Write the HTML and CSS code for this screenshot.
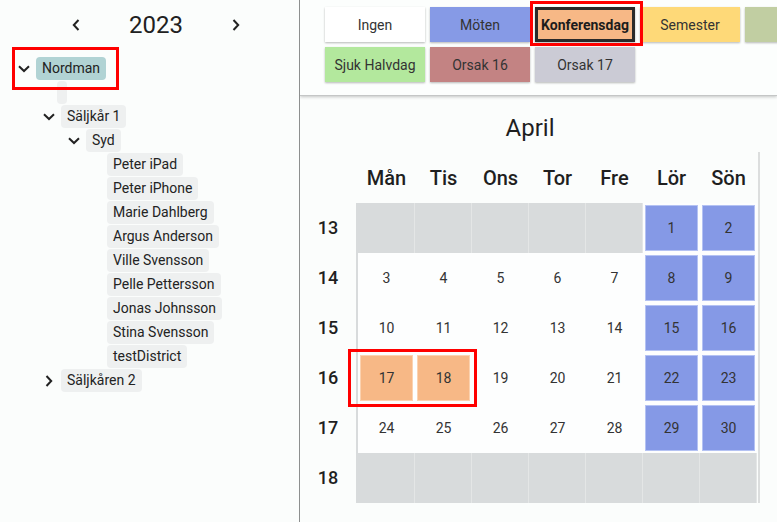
FILE: index.html
```html
<!DOCTYPE html>
<html lang="sv">
<head>
<meta charset="utf-8">
<title>Kalender</title>
<link rel="stylesheet" href="styles.css">
</head>
<body>
<div class="app">
  <aside class="sidebar">
    <div class="yearbar">
      <button class="nav-btn" aria-label="Föregående år">
        <svg width="8" height="12" viewBox="0 0 8 12"><path d="M6.5 1 L1.8 6 L6.5 11" fill="none" stroke="#222" stroke-width="2"/></svg>
      </button>
      <div class="year">2023</div>
      <button class="nav-btn" aria-label="Nästa år">
        <svg width="8" height="12" viewBox="0 0 8 12"><path d="M1.5 1 L6.2 6 L1.5 11" fill="none" stroke="#222" stroke-width="2"/></svg>
      </button>
    </div>
    <ul class="tree">
      <li>
        <div class="row"><span class="twisty"><svg width="12" height="8" viewBox="0 0 12 8"><path d="M1 1.2 L6 6 L11 1.2" fill="none" stroke="#222" stroke-width="2"/></svg></span><span class="chip chip-sel">Nordman</span></div>
        <ul>
          <li><div class="row"><span class="leaf"></span><span class="chip chip-empty"></span></div></li>
          <li>
            <div class="row"><span class="twisty"><svg width="12" height="8" viewBox="0 0 12 8"><path d="M1 1.2 L6 6 L11 1.2" fill="none" stroke="#222" stroke-width="2"/></svg></span><span class="chip">Säljkår 1</span></div>
            <ul>
              <li>
                <div class="row"><span class="twisty"><svg width="12" height="8" viewBox="0 0 12 8"><path d="M1 1.2 L6 6 L11 1.2" fill="none" stroke="#222" stroke-width="2"/></svg></span><span class="chip">Syd</span></div>
                <ul>
                  <li><div class="row"><span class="leaf"></span><span class="chip">Peter iPad</span></div></li>
                  <li><div class="row"><span class="leaf"></span><span class="chip">Peter iPhone</span></div></li>
                  <li><div class="row"><span class="leaf"></span><span class="chip">Marie Dahlberg</span></div></li>
                  <li><div class="row"><span class="leaf"></span><span class="chip">Argus Anderson</span></div></li>
                  <li><div class="row"><span class="leaf"></span><span class="chip">Ville Svensson</span></div></li>
                  <li><div class="row"><span class="leaf"></span><span class="chip">Pelle Pettersson</span></div></li>
                  <li><div class="row"><span class="leaf"></span><span class="chip">Jonas Johnsson</span></div></li>
                  <li><div class="row"><span class="leaf"></span><span class="chip">Stina Svensson</span></div></li>
                  <li><div class="row"><span class="leaf"></span><span class="chip">testDistrict</span></div></li>
                </ul>
              </li>
            </ul>
          </li>
          <li><div class="row"><span class="twisty"><svg width="8" height="12" viewBox="0 0 8 12"><path d="M1.5 1 L6.2 6 L1.5 11" fill="none" stroke="#222" stroke-width="2"/></svg></span><span class="chip">Säljkåren 2</span></div></li>
        </ul>
      </li>
    </ul>
  </aside>

  <main class="main">
    <div class="toolbar">
      <button class="reason r-none">Ingen</button>
      <button class="reason r-meet">Möten</button>
      <button class="reason r-conf active">Konferensdag</button>
      <button class="reason r-vac">Semester</button>
      <button class="reason r-sick" aria-label="Sjuk"></button>
      <button class="reason r-half">Sjuk Halvdag</button>
      <button class="reason r-16">Orsak 16</button>
      <button class="reason r-17">Orsak 17</button>
    </div>

    <section class="cal">
      <h2 class="cal-title">April</h2>
      <div class="cal-table">
        <div class="cal-head">
          <div class="wk-head"></div>
          <div class="dn">Mån</div><div class="dn">Tis</div><div class="dn">Ons</div><div class="dn">Tor</div><div class="dn">Fre</div><div class="dn">Lör</div><div class="dn">Sön</div>
        </div>
        <div class="cal-body">
          <div class="wk-col">
            <div class="wk">13</div><div class="wk">14</div><div class="wk">15</div><div class="wk">16</div><div class="wk">17</div><div class="wk">18</div>
          </div>
          <div class="days">
            <div class="d out"></div><div class="d out"></div><div class="d out"></div><div class="d out"></div><div class="d out"></div>
            <div class="d"><span class="mark m-blue">1</span></div><div class="d"><span class="mark m-blue">2</span></div>

            <div class="d">3</div><div class="d">4</div><div class="d">5</div><div class="d">6</div><div class="d">7</div>
            <div class="d"><span class="mark m-blue">8</span></div><div class="d"><span class="mark m-blue">9</span></div>

            <div class="d">10</div><div class="d">11</div><div class="d">12</div><div class="d">13</div><div class="d">14</div>
            <div class="d"><span class="mark m-blue">15</span></div><div class="d"><span class="mark m-blue">16</span></div>

            <div class="d"><span class="mark m-orange">17</span></div><div class="d"><span class="mark m-orange">18</span></div><div class="d">19</div><div class="d">20</div><div class="d">21</div>
            <div class="d"><span class="mark m-blue">22</span></div><div class="d"><span class="mark m-blue">23</span></div>

            <div class="d">24</div><div class="d">25</div><div class="d">26</div><div class="d">27</div><div class="d">28</div>
            <div class="d"><span class="mark m-blue">29</span></div><div class="d"><span class="mark m-blue">30</span></div>

            <div class="d out"></div><div class="d out"></div><div class="d out"></div><div class="d out"></div><div class="d out"></div><div class="d out"></div><div class="d out"></div>
          </div>
        </div>
      </div>
    </section>
  </main>
</div>

<div class="annot annot-toolbar"></div>
<div class="annot annot-tree"></div>
<div class="annot annot-days"></div>
</body>
</html>
```

FILE: styles.css
```css
* { box-sizing: border-box; }

html, body {
  margin: 0;
  padding: 0;
}

body {
  position: relative;
  width: 777px;
  height: 522px;
  overflow: hidden;
  background: #fbfdfc;
  font-family: Roboto, "Liberation Sans", Arial, sans-serif;
  color: #212121;
}

.app {
  display: flex;
  height: 522px;
}

/* ---------- Sidebar ---------- */
.sidebar {
  width: 300px;
  flex: 0 0 300px;
  border-right: 1px solid #8d8f8f;
  background: #fbfdfc;
}

.yearbar {
  display: flex;
  align-items: center;
  height: 50px;
  padding-left: 64px;
}

.nav-btn {
  width: 24px;
  height: 24px;
  padding: 0;
  border: 0;
  background: transparent;
  display: flex;
  align-items: center;
  justify-content: center;
}

.year {
  width: 112px;
  margin: 0 12px;
  text-align: center;
  font-size: 24px;
  line-height: 28px;
  color: #212121;
}

.tree, .tree ul {
  list-style: none;
  margin: 0;
}

.tree {
  padding: 7px 0 0 11px;
}

.tree ul {
  padding: 0 0 0 25px;
}

.row {
  display: flex;
  align-items: flex-start;
  height: 24px;
}

.twisty {
  width: 25px;
  height: 23px;
  flex: 0 0 25px;
  display: flex;
  align-items: center;
  justify-content: center;
}

.leaf {
  width: 21px;
  flex: 0 0 21px;
}

.chip {
  height: 23px;
  line-height: 23px;
  padding: 0 6px;
  border-radius: 4px;
  background: #eef0f0;
  font-size: 14px;
  color: #232323;
  white-space: nowrap;
}

.chip-sel {
  background: #b1d3d4;
}

.chip-empty {
  width: 10px;
  padding: 0;
}

/* ---------- Main ---------- */
.main {
  flex: 1;
  min-width: 0;
  overflow: hidden;
}

.toolbar {
  display: grid;
  grid-template-columns: repeat(5, 100px);
  grid-auto-rows: 35px;
  gap: 5px;
  height: 96px;
  padding: 7px 0 0 25px;
  border-bottom: 1px solid #c4c6c6;
  box-shadow: 0 1px 3px rgba(0, 0, 0, 0.22);
  background: #fcfefd;
  width: 477px;
  overflow: visible;
}

.reason {
  width: 100px;
  height: 35px;
  padding: 0;
  border: 0;
  font-family: Roboto, "Liberation Sans", Arial, sans-serif;
  font-size: 14px;
  color: #333;
  box-shadow: 0 1px 2px rgba(0, 0, 0, 0.28);
  white-space: nowrap;
}

.r-none { background: #ffffff; }
.r-meet { background: #869ae6; }
.r-conf { background: #f7b886; }
.r-vac  { background: #fed978; }
.r-sick { background: #c1cea2; }
.r-half { background: #b3e89d; }
.r-16   { background: #c38383; }
.r-17   { background: #cbcbd5; }

.reason.active {
  border: 3px solid #2a2a2a;
  font-weight: 700;
  color: #1c1c1c;
}

/* ---------- Calendar ---------- */
.cal {
  width: 460px;
}

.cal-title {
  margin: 0;
  padding: 18px 0 10px;
  line-height: 28px;
  font-size: 24px;
  font-weight: 400;
  text-align: center;
  color: #1f1f1f;
}

.cal-table {
  width: 460px;
  padding-right: 1px;
  border-right: 2px solid #dcdede;
}

.cal-head {
  display: grid;
  grid-template-columns: 58px repeat(7, 57px);
  height: 51px;
}

.dn {
  text-align: center;
  line-height: 52px;
  font-size: 20px;
  font-weight: 500;
  color: #1f1f1f;
}

.cal-body {
  display: flex;
}

.wk-col {
  width: 56px;
  flex: 0 0 56px;
}

.wk {
  height: 50px;
  line-height: 50px;
  text-align: center;
  font-size: 18px;
  font-weight: 500;
  color: #1f1f1f;
}

.days {
  display: grid;
  grid-template-columns: repeat(7, 57px);
  grid-auto-rows: 50px;
  border-left: 2px solid #d8dbdc;
  background: #fdfefe;
}

.d {
  display: flex;
  align-items: center;
  justify-content: center;
  font-size: 14px;
  color: #333;
}

.d.out {
  background: #d8dbdc;
  border-right: 1px solid #e4e6e6;
}

.mark {
  flex: 1;
  align-self: stretch;
  margin: 2px;
  display: flex;
  align-items: center;
  justify-content: center;
  border: 1px solid transparent;
}

.m-blue {
  background: #8599e6;
  border-color: #b4c2f3;
}

.m-orange {
  background: #f7b886;
  border-color: #fbd2b0;
}

/* ---------- Annotation boxes (overlay) ---------- */
.annot {
  position: absolute;
  border: 3px solid #ff0000;
  pointer-events: none;
}

.annot-toolbar { left: 530px; top: 1px; width: 113px; height: 45px; }
.annot-tree    { left: 12px;  top: 47px; width: 107px; height: 43px; }
.annot-days    { left: 348px; top: 349px; width: 129px; height: 58px; }
```
